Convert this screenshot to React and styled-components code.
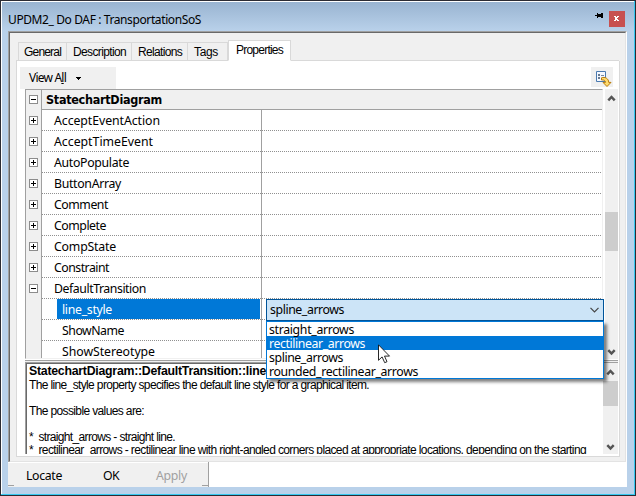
import React, { useLayoutEffect, useRef } from "react";
import styled, { createGlobalStyle, css } from "styled-components";

const GlobalStyle = createGlobalStyle`
  * { box-sizing: border-box; }
  body { margin: 0; overflow: hidden; background: #fff; }
`;

const faces = {
  ui: css`font-family: "Noto Sans", sans-serif; font-size: 12.3px;`,
  title: css`font-family: "Noto Sans", sans-serif; font-size: 12px;`,
  bold: css`font-family: "DejaVu Sans Condensed", "DejaVu Sans", sans-serif; font-size: 12.5px; font-weight: 700;`,
  sans: css`font-family: "Liberation Sans", sans-serif; font-size: 12px;`,
  sansBold: css`font-family: "Liberation Sans", sans-serif; font-size: 12.3px; font-weight: 700;`,
};

const TextSpan = styled.span`
  ${(p) => faces[p.$face || "ui"]}
  display: inline-block;
  vertical-align: top;
  white-space: pre;
  line-height: inherit;
  color: ${(p) => p.$color || "#000"};
`;

/* Tracks the text so that it fills the given width. */
function Text({ width, face, color, children }) {
  const ref = useRef(null);
  useLayoutEffect(() => {
    const el = ref.current;
    el.style.letterSpacing = "0px";
    const natural = el.getBoundingClientRect().width;
    const count = el.textContent.length;
    el.style.letterSpacing = `${(width - natural) / count}px`;
  }, [width, children]);
  return <TextSpan ref={ref} $face={face} $color={color}>{children}</TextSpan>;
}

const Window = styled.div`
  width: 636px;
  height: 496px;
  border: 1px solid #2b2b33;
  background: #b9d1ea;
  display: flex;
  flex-direction: column;
  box-shadow: inset -1px -1px 0 #35c8f0, inset 1px 1px 0 #fff;
`;

const TitleBar = styled.header`
  height: 29px;
  margin: 1px 1px 0;
  padding: 4px 9px 0 6px;
  display: flex;
  line-height: 27px;
  background: linear-gradient(#99b4d1, #b9d1ea);
`;

const TitleTools = styled.div`
  margin-left: auto;
  display: flex;
  padding-top: 5px;
  gap: 6px;
`;

const CloseButton = styled.button`
  width: 16px;
  height: 16px;
  padding: 0;
  border: 0;
  background: #c75050;
  display: block;
  svg { display: block; }
`;

const Frame = styled.main`
  width: 619px;
  height: 431px;
  margin-left: 7px;
  border-top: 1px solid #a0a0a0;
  border-left: 1px solid #a0a0a0;
  border-right: 1px solid #fff;
  background: #f0f0f0;
`;

const FrameInner = styled.div`
  height: 430px;
  border: 1px solid #e3e3e3;
  border-top-color: #696969;
  border-left-color: #696969;
  padding: 7px 6px 0 6px;
`;

const Tabs = styled.nav`
  height: 21px;
  display: flex;
  align-items: flex-end;
  padding-left: 2px;
  box-shadow: inset 0 -1px 0 #d9d9d9;
`;

const Tab = styled.div`
  height: ${(p) => (p.$active ? 21 : 19)}px;
  width: ${(p) => p.$width}px;
  padding-left: ${(p) => p.$pad}px;
  line-height: ${(p) => (p.$active ? 19 : 18)}px;
  border: 1px solid #d9d9d9;
  border-bottom-color: ${(p) => (p.$active ? "#fff" : "#d9d9d9")};
  border-left-width: ${(p) => (p.$joined ? 0 : 1)}px;
  background: ${(p) => (p.$active ? "#fff" : "#f0f0f0")};
`;

const Page = styled.section`
  width: 604px;
  height: 396px;
  border: 1px solid #d9d9d9;
  border-top: 0;
  background: #fff;
`;

const Toolbar = styled.div`
  height: 28px;
  padding: 6px 6px 0 3px;
  display: flex;
  justify-content: space-between;
`;

const ViewMenu = styled.div`
  width: 96px;
  height: 22px;
  padding-left: 9px;
  background: #f0f0f0;
  display: flex;
  align-items: center;
  line-height: 22px;
  gap: 10px;
`;

const ToolButton = styled.div`
  width: 22px;
  height: 20px;
  background: #f0f0f0;
  svg { display: block; }
`;

const GridArea = styled.div`
  height: 270px;
  margin-left: 8px;
  display: flex;
`;

const Grid = styled.div`
  width: 578px;
  height: 270px;
  border-top: 1px solid #a0a0a0;
  border-left: 1px solid #a0a0a0;
  border-right: 1px solid #f0f0f0;
  border-bottom: 1px solid #f0f0f0;
`;

const Row = styled.div`
  display: grid;
  grid-template-columns: 16px 220px 1fr;
  grid-template-rows: ${(p) => p.$height || 21}px;
`;

const Gutter = styled.div`
  background: #f0f0f0;
  border-right: 1px solid #a0a0a0;
  padding: ${(p) => (p.$head ? 5 : 6)}px 0 0 3px;
`;

const Expander = styled.div`
  width: 9px;
  height: 9px;
  border: 1px solid #8c8c8c;
  background:
    linear-gradient(#000, #000) center / 5px 1px no-repeat,
    linear-gradient(#000, #000) center / ${(p) => (p.$open ? "0 0" : "1px 5px")} no-repeat,
    #fff;
`;

const dotted = css`
  background-image: repeating-linear-gradient(90deg, #909090 0 1px, #fff 1px 2px);
  background-size: ${(p) => (p.$last ? "0 0" : "100% 1px")};
  background-position: left bottom;
  background-repeat: no-repeat;
`;

const NameCell = styled.div`
  ${dotted}
  border-right: 1px solid #a0a0a0;
  line-height: 22px;
  padding-left: ${(p) => (p.$level ? 15 : 12)}px;
`;

const SelectedName = styled.div`
  width: 203px;
  height: 20px;
  padding-left: 5px;
  background: #0078d7;
`;

const Indent = styled.div`
  padding-left: 5px;
`;

const ValueCell = styled.div`
  ${dotted}
  padding-left: 4px;
`;

const HeadCell = styled.div`
  grid-column: 2 / 4;
  padding-left: 4px;
  line-height: 19px;
  background: #f0f0f0;
  border-bottom: 1px solid #a0a0a0;
`;

const ComboHolder = styled.div`
  position: relative;
  z-index: 2;
  width: 338px;
  height: 22px;
`;

const Combo = styled.div`
  height: 22px;
  border: 1px solid #005499;
  background: #cce4f7;
  line-height: 22px;
  padding: 0 4px 0 3px;
  display: flex;
  justify-content: space-between;
  align-items: center;
`;

const DropList = styled.div`
  position: absolute;
  top: 22px;
  left: 0;
  width: 338px;
  height: 58px;
  border: 1px solid #0078d7;
  background: #fff;
  box-shadow: 3px 3px 3px rgba(0, 0, 0, 0.5);
`;

const Option = styled.div`
  height: 14px;
  line-height: 16px;
  padding-left: 2px;
  background: ${(p) => (p.$active ? "#0078d7" : "transparent")};
`;

const Pointer = styled.svg`
  position: absolute;
  left: 112px;
  top: 45px;
`;

const ScrollBar = styled.div`
  width: ${(p) => p.$width}px;
  height: ${(p) => p.$height}px;
  margin-left: auto;
  margin-right: 1px;
  flex: none;
  background: #f0f0f0;
  display: flex;
  flex-direction: column;
  justify-content: space-between;
  align-items: center;
  svg { display: block; flex: none; }
`;

const Track = styled.div`
  align-self: stretch;
  flex: 1;
  padding-top: ${(p) => p.$offset}px;
`;

const Thumb = styled.div`
  height: ${(p) => p.$size}px;
  background: #cdcdcd;
`;

const Splitter = styled.div`
  height: 4px;
  margin: 0 1px 0 8px;
  border-top: 1px solid #fff;
  background: linear-gradient(#a0a0a0 0 1px, #f0f0f0 1px 2px, #a0a0a0 2px 3px);
`;

const HelpBox = styled.div`
  height: 91px;
  margin: 0 0 0 8px;
  border-left: 1px solid #a0a0a0;
  display: flex;
`;

const HelpText = styled.div`
  width: 577px;
  height: 91px;
  overflow: hidden;
  border-left: 1px solid #696969;
  border-top: 1px solid #696969;
  padding: 0 0 0 2px;
`;

const HelpLine = styled.div`
  height: 13px;
  line-height: ${(p) => (p.$title ? 15 : 17)}px;
  white-space: nowrap;
`;

const Footer = styled.footer`
  height: 25px;
  width: 619px;
  margin-left: 7px;
  background: #fff;
`;

const Actions = styled.div`
  width: 201px;
  height: 25px;
  display: flex;
  line-height: 26px;
  background:
    linear-gradient(#a0a0a0, #a0a0a0) left 0 bottom 1px / 6px 1px no-repeat,
    linear-gradient(#a0a0a0, #a0a0a0) right 0 bottom 1px / 6px 1px no-repeat,
    #f0f0f0;
  border-right: 1px solid #a0a0a0;
  box-shadow: inset 0 1px 0 #fff;
`;

const Action = styled.div`
  width: ${(p) => p.$width}px;
  padding-left: ${(p) => p.$pad}px;
  padding-top: 1px;
`;

function Chevron({ up }) {
  return (
    <svg width="13" height="18" viewBox="0 0 13 18">
      <path d={up ? "M3.300 11.300 6.500 8 9.700 11.300" : "M3.300 9.200 6.500 12.500 9.700 9.200"} fill="none" stroke="#555" strokeWidth="2.5" />
    </svg>
  );
}

const tabs = [
  { label: "General", box: 49, pad: 5, width: 37 },
  { label: "Description", box: 65, pad: 6, width: 53, joined: true },
  { label: "Relations", box: 56, pad: 6, width: 44, joined: true },
  { label: "Tags", box: 40, pad: 6, width: 24, joined: true },
  { label: "Properties", box: 63, pad: 7, width: 47, active: true },
];

const rows = [
  ["AcceptEventAction", 106],
  ["AcceptTimeEvent", 99],
  ["AutoPopulate", 75],
  ["ButtonArray", 67],
  ["Comment", 54],
  ["Complete", 52],
  ["CompState", 62],
  ["Constraint", 55],
];

const options = [
  ["straight_arrows", 85],
  ["rectilinear_arrows", 96],
  ["spline_arrows", 74],
  ["rounded_rectilinear_arrows", 149],
];

const help = [
  ["The line_style property specifies the default line style for a graphical item.", 340],
  null,
  ["The possible values are:", 115],
  null,
  ["*  straight_arrows - straight line.", 146],
  ["*  rectilinear_arrows - rectilinear line with right-angled corners placed at appropriate locations, depending on the starting", 557],
];

function PropertyRow({ name, width, level, open, leaf, selected, last, children }) {
  const label = <Text width={width} color={selected ? "#fff" : "#000"}>{name}</Text>;
  return (
    <Row $height={last ? 17 : 21}>
      <Gutter>{!leaf && <Expander $open={open} />}</Gutter>
      <NameCell $level={level} $last={last}>
        {selected ? <SelectedName>{label}</SelectedName> : level ? <Indent>{label}</Indent> : label}
      </NameCell>
      <ValueCell $last={last}>{children}</ValueCell>
    </Row>
  );
}

export default function App() {
  return (
    <>
      <GlobalStyle />
      <Window>
        <TitleBar>
          <Text face="title" width={193}>UPDM2_ Do DAF : TransportationSoS</Text>
          <TitleTools>
            <svg width="8" height="9" viewBox="0 0 8 9" shapeRendering="crispEdges">
              <path d="M0 4h3v1H0zM2 2h1v5H2zM3 3h4v3H3zM6 2h2v5H6z" fill="#000" />
            </svg>
            <CloseButton>
              <svg width="16" height="16" viewBox="0 0 16 16" shapeRendering="crispEdges">
                <path d="M5 5h2v1h1v-1h2v1h-1v1h-1v1h1v1h1v1h-2v-1h-1v1h-2v-1h1v-3h-1z" fill="#fff" />
              </svg>
            </CloseButton>
          </TitleTools>
        </TitleBar>
        <Frame>
          <FrameInner>
            <Tabs>
              {tabs.map((t) => (
                <Tab key={t.label} $width={t.box} $pad={t.pad} $active={t.active} $joined={t.joined}>
                  <Text face="sans" width={t.width}>{t.label}</Text>
                </Tab>
              ))}
            </Tabs>
            <Page>
              <Toolbar>
                <ViewMenu>
                  <Text face="title" width={37}>View A<u>l</u>l</Text>
                  <svg width="5" height="3" viewBox="0 0 5 3" shapeRendering="crispEdges"><path d="M0 0h5v1H0zM1 1h3v1H1zM2 2h1v1H2z" /></svg>
                </ViewMenu>
                <ToolButton>
                  <svg width="22" height="20" viewBox="0 0 22 20">
                    <path d="M5.500 4.500h9v10h-9z" fill="#f4f8ff" stroke="#4a7ab0" />
                    <path d="M7 7h2v2H7zM7 10h2v2H7z" fill="#667890" />
                    <path d="M10 8.500h3M10 11.500h2" stroke="#7787a0" />
                    <path d="M10.500 10.800C14 9.500 17.600 11.500 17.700 15.400H20L16 19.500 12 15.400h2.500C14.400 13.500 13 12.600 10.500 13z" fill="#ffdc70" stroke="#b87a08" strokeWidth="1" />
                  </svg>
                </ToolButton>
              </Toolbar>
              <GridArea>
                <Grid>
                  <Row $height={20}>
                    <Gutter $head><Expander $open /></Gutter>
                    <HeadCell><Text face="bold" width={116}>StatechartDiagram</Text></HeadCell>
                  </Row>
                  {rows.map(([name, width]) => <PropertyRow key={name} name={name} width={width} />)}
                  <PropertyRow name="DefaultTransition" width={92} open />
                  <PropertyRow name="line_style" width={50} level={1} leaf selected>
                    <ComboHolder>
                      <Combo>
                        <Text width={74}>spline_arrows</Text>
                        <svg width="9" height="6" viewBox="0 0 9 6"><path d="M.5.8 4.500 4.800 8.500.8" fill="none" stroke="#444" strokeWidth="1.2" /></svg>
                      </Combo>
                      <DropList>
                        {options.map(([name, width], i) => (
                          <Option key={name} $active={i === 1}>
                            <Text width={width} color={i === 1 ? "#fff" : "#000"}>{name}</Text>
                          </Option>
                        ))}
                      </DropList>
                      <Pointer width="13" height="20" viewBox="0 0 13 20">
                        <path d="M.5.8v15.500l3.600-3.400 2.600 5.800 2.300-1-2.500-5.600h5z" fill="#fff" stroke="#111" strokeWidth=".9" />
                      </Pointer>
                    </ComboHolder>
                  </PropertyRow>
                  <PropertyRow name="ShowName" width={62} level={1} leaf />
                  <PropertyRow name="ShowStereotype" width={93} level={1} leaf last />
                </Grid>
                <ScrollBar $width={13} $height={270}>
                  <Chevron up />
                  <Track $offset={105}><Thumb $size={39} /></Track>
                  <Chevron />
                </ScrollBar>
              </GridArea>
              <Splitter />
              <HelpBox>
                <HelpText>
                  <HelpLine $title><Text face="sansBold" width={237}>StatechartDiagram::DefaultTransition::line</Text></HelpLine>
                  {help.map((line, i) => (
                    <HelpLine key={i}>{line && <Text face="sans" width={line[1]}>{line[0]}</Text>}</HelpLine>
                  ))}
                </HelpText>
                <ScrollBar $width={15} $height={91}>
                  <Chevron up />
                  <Track $offset={0}><Thumb $size={25} /></Track>
                  <Chevron />
                </ScrollBar>
              </HelpBox>
            </Page>
          </FrameInner>
        </Frame>
        <Footer>
          <Actions>
            <Action $width={80} $pad={18}><Text width={36}>Locate</Text></Action>
            <Action $width={60} $pad={15}><Text width={16}>OK</Text></Action>
            <Action $width={55} $pad={8}><Text width={31} color="#a0a0a0">Apply</Text></Action>
          </Actions>
        </Footer>
      </Window>
    </>
  );
}
